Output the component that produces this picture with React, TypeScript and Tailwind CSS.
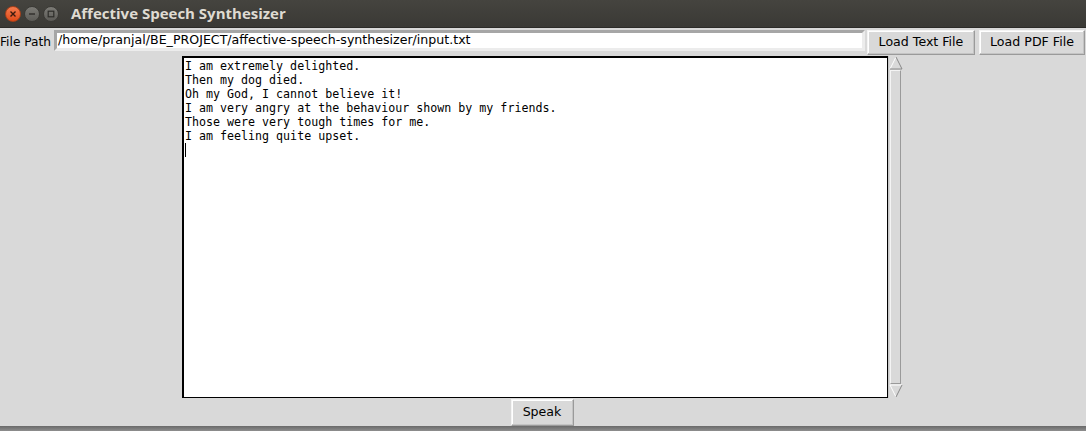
import React from "react";

const lines = [
  "I am extremely delighted.",
  "Then my dog died.",
  "Oh my God, I cannot believe it!",
  "I am very angry at the behaviour shown by my friends.",
  "Those were very tough times for me.",
  "I am feeling quite upset.",
];

function TkButton({ label, className }: { label: string; className: string }) {
  return (
    <div
      className={
        "flex items-center justify-center whitespace-nowrap bg-[#d9d9d9] border border-t-[#f4f4f4] border-l-[#f4f4f4] border-b-[#9a9a9a] border-r-[#9a9a9a] shadow-[inset_-1px_-1px_0_#c4c4c4,inset_1px_1px_0_#ffffff] text-black text-[12.6px] " +
        className
      }
      style={{ fontFamily: '"DejaVu Sans", "Noto Sans", sans-serif' }}
    >
      {label}
    </div>
  );
}

export default function App() {
  return (
    <div className="w-[1086px] h-[431px] flex flex-col bg-[#8a8a8a] overflow-hidden">
      {/* title bar */}
      <div className="h-[28px] shrink-0 flex items-center bg-gradient-to-b from-[#45443f] to-[#3a3935] border-b border-[#2c2b28]">
        <div className="flex items-center gap-[3px] pl-[5px]">
          <div className="w-[16px] h-[16px] rounded-full bg-gradient-to-b from-[#f47a4c] to-[#df4a16] border border-[#a8401a] flex items-center justify-center">
            <svg width="8" height="8" viewBox="0 0 8 8">
              <path d="M1.5 1.5 L6.5 6.5 M6.5 1.5 L1.5 6.5" stroke="#3a1a0e" strokeWidth="1.4" />
            </svg>
          </div>
          <div className="w-[16px] h-[16px] rounded-full bg-gradient-to-b from-[#7c7b76] to-[#5c5b57] border border-[#3b3a36] flex items-center justify-center">
            <svg width="8" height="8" viewBox="0 0 8 8">
              <path d="M1 4 L7 4" stroke="#2e2d2a" strokeWidth="1.4" />
            </svg>
          </div>
          <div className="w-[16px] h-[16px] rounded-full bg-gradient-to-b from-[#7c7b76] to-[#5c5b57] border border-[#3b3a36] flex items-center justify-center">
            <svg width="8" height="8" viewBox="0 0 8 8">
              <rect x="1.2" y="1.2" width="5.6" height="5.6" fill="none" stroke="#2e2d2a" strokeWidth="1.2" />
            </svg>
          </div>
        </div>
        <div
          className="ml-[12px] text-[15px] font-bold text-[#dfdbd2] leading-none"
          style={{ fontFamily: '"Open Sans", "DejaVu Sans", sans-serif' }}
        >
          Affective Speech Synthesizer
        </div>
      </div>

      {/* body */}
      <div className="h-[398px] shrink-0 bg-[#d9d9d9] flex flex-col">
        {/* file row */}
        <div className="flex items-center h-[27px] mt-[1px]">
          <div
            className="w-[54px] shrink-0 whitespace-nowrap text-[12.2px] text-black leading-none"
            style={{ fontFamily: '"DejaVu Sans", "Noto Sans", sans-serif' }}
          >
            File Path
          </div>
          <div className="h-[21px] w-[811px] shrink-0 mt-[-4px] bg-white border-[3px] border-t-[#a6a6a6] border-l-[#a6a6a6] border-b-[#ececec] border-r-[#ececec] flex items-center">
            <span
              className="pl-[1px] whitespace-nowrap text-[12.6px] text-black leading-none"
              style={{ fontFamily: '"DejaVu Sans", "Noto Sans", sans-serif' }}
            >
              /home/pranjal/BE_PROJECT/affective-speech-synthesizer/input.txt
            </span>
          </div>
          <TkButton label="Load Text File" className="ml-[2px] w-[108px] h-[25px] shrink-0" />
          <TkButton label="Load PDF File" className="ml-[4px] w-[106px] h-[25px] shrink-0" />
        </div>

        {/* text area + scrollbar */}
        <div className="flex justify-center mt-[1px] pr-[2px]">
          <div className="flex">
            <div className="w-[706px] h-[342px] bg-white border border-black shadow-[inset_1px_1px_0_#000] pl-[2px] pt-[2px]">
              <div
                className="text-[11.65px] leading-[14px] text-black"
                style={{ fontFamily: '"DejaVu Sans Mono", "Liberation Mono", monospace' }}
              >
                {lines.map((l) => (
                  <div key={l} className="whitespace-pre">
                    {l}
                  </div>
                ))}
                <div className="w-[1px] h-[14px] bg-black" />
              </div>
            </div>
            <div className="w-[14px] h-[342px] bg-[#d9d9d9] flex flex-col border-l border-[#c8c8c8]">
              <svg width="14" height="14" viewBox="0 0 14 14" className="shrink-0">
                <polygon points="7,1 13,13 1,13" fill="#d9d9d9" />
                <path d="M7 1 L1 13" stroke="#ffffff" strokeWidth="1" />
                <path d="M7 1 L13 13 L1 13" stroke="#888888" strokeWidth="1" fill="none" />
              </svg>
              <div className="flex-1 mx-[1px] bg-[#d9d9d9] border border-t-[#f4f4f4] border-l-[#f4f4f4] border-b-[#9a9a9a] border-r-[#9a9a9a]" />
              <svg width="14" height="14" viewBox="0 0 14 14" className="shrink-0">
                <polygon points="1,1 13,1 7,13" fill="#d9d9d9" />
                <path d="M1 1 L13 1 M1 1 L7 13" stroke="#ffffff" strokeWidth="1" fill="none" />
                <path d="M13 1 L7 13" stroke="#888888" strokeWidth="1" />
              </svg>
            </div>
          </div>
        </div>

        {/* speak */}
        <div className="flex justify-center mt-[1px] pr-[2px]">
          <TkButton label="Speak" className="w-[63px] h-[27px]" />
        </div>
      </div>

      {/* bottom shadow */}
      <div className="flex-1 bg-gradient-to-b from-[#6a6a6a] to-[#8e8e8e]" />
    </div>
  );
}
